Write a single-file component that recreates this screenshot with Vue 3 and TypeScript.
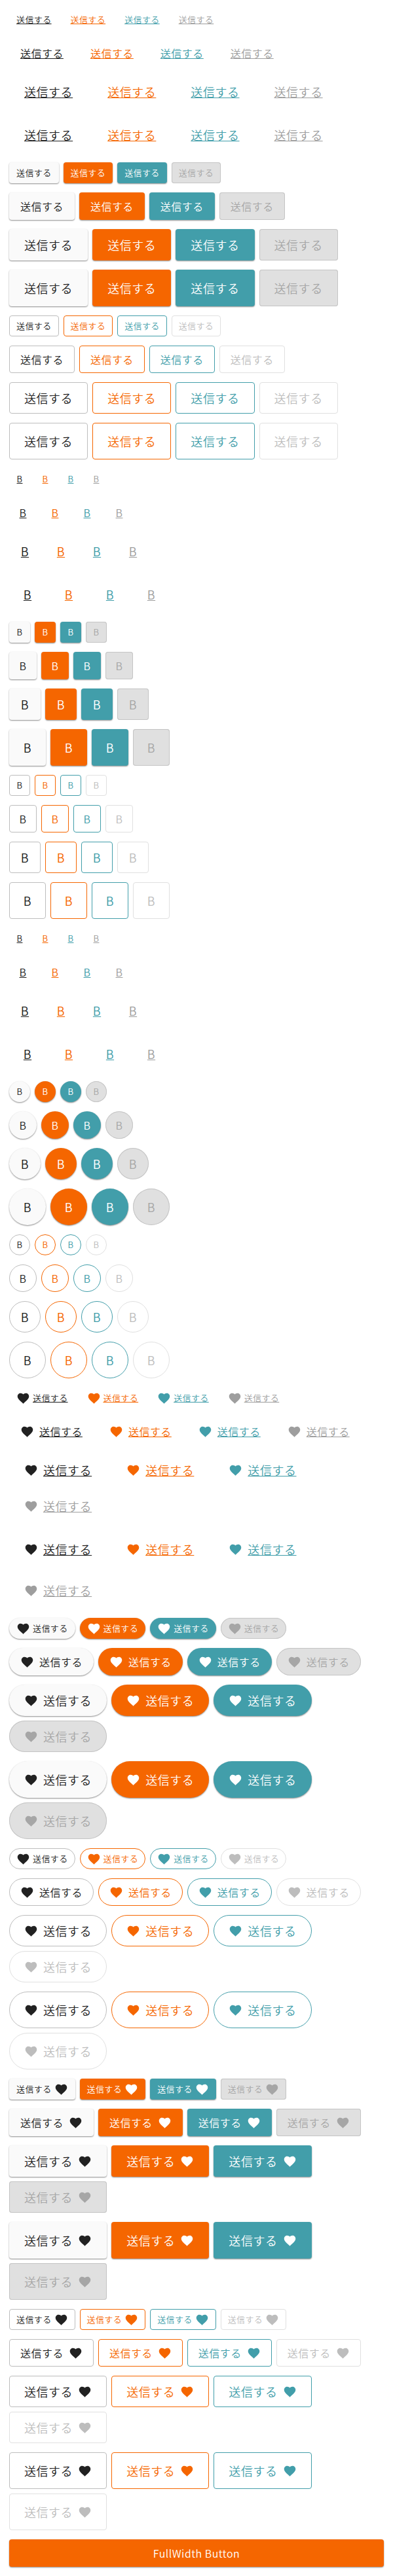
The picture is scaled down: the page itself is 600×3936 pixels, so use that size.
<script setup lang="ts">
type Variant = 'text' | 'contained' | 'outlined'
type Shape = 'rect' | 'square' | 'circle' | 'pill'
type IconSide = 'none' | 'start' | 'end'

interface Group {
  variant: Variant
  shape: Shape
  icon: IconSide
  label: string
}

const sizes = ['small', 'medium', 'large', 'xlarge'] as const
const colors = ['default', 'primary', 'secondary', 'disabled'] as const

const group = (variant: Variant, shape: Shape, icon: IconSide, label: string): Group => ({
  variant,
  shape,
  icon,
  label,
})

const groups: Group[] = [
  group('text', 'rect', 'none', '送信する'),
  group('contained', 'rect', 'none', '送信する'),
  group('outlined', 'rect', 'none', '送信する'),
  group('text', 'square', 'none', 'B'),
  group('contained', 'square', 'none', 'B'),
  group('outlined', 'square', 'none', 'B'),
  group('text', 'circle', 'none', 'B'),
  group('contained', 'circle', 'none', 'B'),
  group('outlined', 'circle', 'none', 'B'),
  group('text', 'pill', 'start', '送信する'),
  group('contained', 'pill', 'start', '送信する'),
  group('outlined', 'pill', 'start', '送信する'),
  group('contained', 'rect', 'end', '送信する'),
  group('outlined', 'rect', 'end', '送信する'),
]
</script>

<template>
  <main class="page">
    <template v-for="(g, i) in groups" :key="i">
      <div v-for="size in sizes" :key="size" class="row">
        <button
          v-for="color in colors"
          :key="color"
          type="button"
          class="btn"
          :class="[g.variant, g.shape, size, color, `icon-${g.icon}`]"
          :disabled="color === 'disabled'"
        >
          <svg v-if="g.icon !== 'none'" class="icon" viewBox="0 0 24 24" aria-hidden="true">
            <path
              d="M12 21.35l-1.45-1.32C5.4 15.36 2 12.28 2 8.5 2 5.42 4.42 3 7.5 3c1.74 0 3.41.81 4.5 2.09C13.09 3.81 14.76 3 16.5 3 19.58 3 22 5.42 22 8.5c0 3.78-3.4 6.86-8.55 11.54L12 21.35z"
            />
          </svg>
          <span class="label">{{ g.label }}</span>
        </button>
      </div>
    </template>
    <button type="button" class="btn contained rect medium primary full">
      <span class="label">FullWidth Button</span>
    </button>
  </main>
</template>

<style>
body {
  margin: 0;
  background: #fff;
}
</style>

<style scoped>
.page {
  display: flex;
  flex-direction: column;
  gap: 14px;
  padding: 14px;
  font-family: 'Noto Sans CJK JP', sans-serif;
}

.row {
  display: flex;
  flex-wrap: wrap;
  gap: 7px;
}

.btn {
  box-sizing: border-box;
  display: inline-flex;
  align-items: center;
  justify-content: center;
  margin: 0;
  border: 1px solid transparent;
  border-radius: 4px;
  background: transparent;
  color: #212121;
  font-family: inherit;
  font-weight: 350;
  line-height: 28px;
  letter-spacing: 0.03em;
  white-space: nowrap;
  cursor: pointer;
}

.btn:disabled {
  cursor: default;
}

.small {
  height: 32px;
  padding: 0 10px;
  font-size: 13px;
}

.medium {
  height: 42px;
  padding: 0 16px;
  font-size: 16px;
}

.large {
  height: 48px;
  padding: 0 22px;
  font-size: 18px;
}

.xlarge {
  height: 56px;
  padding: 0 22px;
  font-size: 18px;
}

.square,
.circle {
  aspect-ratio: 1;
  padding: 0;
}

.circle {
  border-radius: 50%;
}

.pill {
  border-radius: 28px;
}

/* Icons */
.icon {
  flex: none;
  width: 21px;
  height: 21px;
  fill: currentColor;
}

.icon-start,
.icon-end {
  gap: 8px;
}

.small.icon-start,
.small.icon-end {
  gap: 4px;
}

.icon-end .icon {
  order: 1;
}

/* Text */
.text .label {
  text-decoration: underline;
  text-decoration-thickness: 1px;
  text-underline-offset: 1px;
  text-decoration-skip-ink: none;
}

.primary {
  color: #f56600;
}

.secondary {
  color: #429eaa;
}

.text.disabled {
  color: #9e9e9e;
}

/* Contained */
.contained {
  border: 0;
  background: #fafafa;
  box-shadow: 0 1px 2px rgba(0, 0, 0, 0.45);
}

.contained.small:not(.square):not(.circle) {
  padding: 0 11px;
}

.contained.medium:not(.square):not(.circle) {
  padding: 0 17px;
}

.contained.large:not(.square):not(.circle),
.contained.xlarge:not(.square):not(.circle) {
  padding: 0 23px;
}

.contained.primary {
  background: #f56600;
  color: #fff;
}

.contained.secondary {
  background: #429eaa;
  color: #fff;
}

.contained.disabled {
  background: #e0e0e0;
  color: #a6a6a6;
  box-shadow: inset 0 0 0 1px #c4c4c4;
}

/* Outlined */
.outlined {
  border-color: #bdbdbd;
}

.outlined.primary {
  border-color: #f56600;
}

.outlined.secondary {
  border-color: #429eaa;
}

.outlined.disabled {
  border-color: #e0e0e0;
  color: #bdbdbd;
}

.full {
  width: 100%;
}
</style>
